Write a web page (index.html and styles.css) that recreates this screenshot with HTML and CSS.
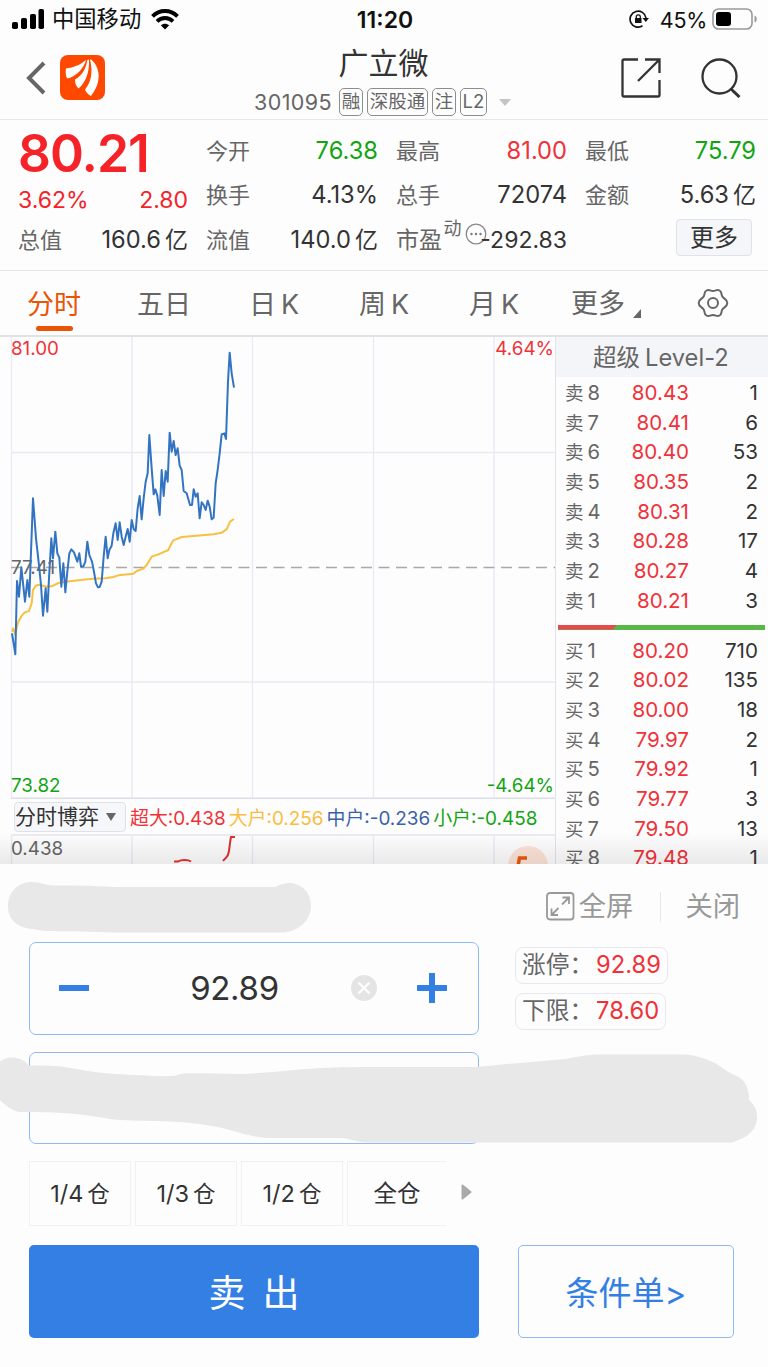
FILE: index.html
```html
<!DOCTYPE html>
<html lang="zh-CN">
<head>
  <meta charset="UTF-8">
  <title>广立微 301095</title>
  <link rel="stylesheet" href="styles.css">
</head>
<body>

  <div class="status-bar">
    <div class="status-left">
      <svg width="32" height="20" viewBox="0 0 32 20">
        <rect x="0" y="13" width="6" height="7" rx="1.8"/>
        <rect x="9" y="9" width="6" height="11" rx="1.8"/>
        <rect x="18" y="5" width="6" height="15" rx="1.8"/>
        <rect x="26.500" y="0" width="5.500" height="20" rx="1.800"/>
      </svg>
      <span class="carrier">中国移动</span>
      <svg class="wifi" width="28" height="21" viewBox="0 0 28 21" fill="none" stroke="#000" stroke-width="3.800">
        <path d="M1.500 7.300C8.500 .2 19.500 .2 26.500 7.300"/>
        <path d="M6 12.300c4.500-4.400 11.500-4.400 16 0"/>
        <path d="M9.800 16.300c2.400-2.200 6-2.200 8.400 0L14 20.500z" fill="#000" stroke="none"/>
      </svg>
    </div>
    <div class="clock">11:20</div>
    <div class="status-right">
      <svg width="21" height="18" viewBox="0 0 21 18" fill="none" stroke="#111" stroke-width="1.700">
        <path d="M13.500 15.800A8 8 0 1 1 17 8"/>
        <path d="M13.500 8h6.500l-3.200 4z" fill="#111" stroke="none"/>
        <rect x="6" y="8" width="6.500" height="5" fill="#111" stroke="none"/>
        <path d="M7.300 8.500V6.800a2 2 0 0 1 4 0v1.700" stroke-width="1.300"/>
      </svg>
      <span class="battery-text">45%</span>
      <svg width="46" height="22" viewBox="0 0 46 22">
        <rect x="1" y="1" width="39" height="20" rx="5.500" fill="none" stroke="#999" stroke-width="1.600"/>
        <rect x="4" y="4" width="15" height="14" rx="3"/>
        <path d="M42.500 7.500c3 1 3 6 0 7z" fill="#999"/>
      </svg>
    </div>
  </div>

  <div class="header">
    <div class="header-side">
      <svg class="back" width="20" height="34" viewBox="0 0 20 34" fill="none" stroke="#666" stroke-width="4">
        <path d="M18 2L3 17l15 15"/>
      </svg>
      <svg class="logo" width="45" height="45" viewBox="0 0 45 45">
        <rect width="45" height="45" rx="8" fill="#ff4800"/>
        <g fill="#fff">
          <path d="M6 13.500C14 12.500 21 9.500 26 5c-2 8-9 15.500-18 18.500C6 23.500 5.300 18 6 13.500z"/>
          <path d="M15 24.500C22 20.500 26 14 27.300 5l1.700-.5C29.500 17 26 27 18.500 33.500c-2.500-2.500-3.500-5-3.500-9z"/>
          <path d="M31 4.500c10 8 10.500 23.500 0 36.500-3-1.500-5-3.500-6-6.500C31.500 27 33 16 30 4.500z"/>
        </g>
      </svg>
    </div>
    <div class="header-title">
      <div class="stock-name">广立微</div>
      <div class="stock-meta">
        <span class="code">301095</span>
        <span class="tag">融</span>
        <span class="tag tag-wide">深股通</span>
        <span class="tag">注</span>
        <span class="tag tag-l2">L2</span>
        <span class="caret"></span>
      </div>
    </div>
    <div class="header-side header-tools">
      <svg width="40" height="40" viewBox="0 0 40 40" fill="none" stroke="#333" stroke-width="2.300">
        <path d="M17 1.500H3Q1.500 1.500 1.500 3v34q0 1.500 1.500 1.500h34q1.500 0 1.500-1.500V22"/>
        <path d="M24 1.500h14.500V15M38 2L17 23"/>
      </svg>
      <svg width="40" height="40" viewBox="0 0 40 40" fill="none" stroke="#333" stroke-width="2.300">
        <circle cx="18.500" cy="18.500" r="17"/>
        <path d="M29.500 30.500l9 8.500" stroke-width="3"/>
      </svg>
    </div>
  </div>

  <div class="quote">
    <div class="quote-main">
      <div class="price">80.21</div>
      <div class="change"><span>3.62%</span><span>2.80</span></div>
    </div>
    <div class="cell"><span class="label">今开</span><span class="value down">76.38</span></div>
    <div class="cell"><span class="label">最高</span><span class="value up">81.00</span></div>
    <div class="cell"><span class="label">最低</span><span class="value down">75.79</span></div>
    <div class="cell"><span class="label">换手</span><span class="value">4.13%</span></div>
    <div class="cell"><span class="label">总手</span><span class="value">72074</span></div>
    <div class="cell"><span class="label">金额</span><span class="value">5.63<i>亿</i></span></div>
    <div class="cell"><span class="label">总值</span><span class="value">160.6<i>亿</i></span></div>
    <div class="cell"><span class="label">流值</span><span class="value">140.0<i>亿</i></span></div>
    <div class="cell pe">
      <span class="label">市盈</span><span class="pe-type">动</span>
      <svg class="pe-info" width="22" height="22" viewBox="0 0 22 22">
        <circle cx="11" cy="11" r="9.800" fill="none" stroke="#888" stroke-width="1.300"/>
        <g fill="#777"><circle cx="6.500" cy="11" r="1.200"/><circle cx="11" cy="11" r="1.200"/><circle cx="15.500" cy="11" r="1.200"/></g>
      </svg>
      <span class="value">-292.83</span>
    </div>
    <div class="cell cell-more"><button class="more-btn">更多</button></div>
  </div>

  <div class="tabs">
    <div class="tab active">分时</div>
    <div class="tab">五日</div>
    <div class="tab">日<b>K</b></div>
    <div class="tab">周<b>K</b></div>
    <div class="tab">月<b>K</b></div>
    <div class="tab tab-more">更多<svg width="8" height="9" viewBox="0 0 8 9"><path d="M8 0v9H0z" fill="#666"/></svg></div>
    <div class="tab-gear">
      <svg width="32" height="30" viewBox="0 0 32 30" fill="none" stroke="#666" stroke-width="2">
        <path d="M9.500 2.500C12 .8 13 3 16 3s4-2.200 6.500-.5c2.700 1.500 1.300 3.500 2.800 6s5 2.500 5 6.500-3.500 4-5 6.500-.1 4.500-2.800 6C20 29.200 19 27 16 27s-4 2.200-6.500.5c-2.700-1.500-1.300-3.500-2.800-6s-5-2.500-5-6.500 3.500-4 5-6.500.1-4.500 2.800-6z"/>
        <circle cx="16" cy="15" r="5"/>
      </svg>
    </div>
  </div>

  <div class="market">
    <div class="charts">
      <svg class="chart" width="555" height="462" viewBox="0 0 555 462">
        <g stroke="#e9eaf3" stroke-width="1.300" fill="none">
          <path d="M11.500 0v461M132 0v461M252.500 0v461M373.500 0v461M494 0v461"/>
          <path d="M11 115.500h544M11 345h544"/>
        </g>
        <path d="M11 461.500h544" stroke="#dcdee8" stroke-width="2"/>
        <path d="M11 230.500h544" stroke="#a9a9a9" stroke-width="1.500" stroke-dasharray="11 6.500"/>
        <text x="11" y="236.500" class="axis">77.41</text>
        <g transform="translate(0 -2) scale(.33333)" fill="none" stroke-width="6" stroke-linejoin="round">
          <polyline stroke="#f8c040" points="36,890 40,880 45,898 55,860 65,842 75,832 87,828 95,805 99,765 107,752 118,749 140,755 155,754 175,744 195,741 215,738 250,734 280,731 315,730 340,726 355,721 400,716 410,708 430,701 440,690 455,665 475,658 505,645 512,630 520,616 545,606 590,602 640,598 665,593 680,583 690,560 702,552"/>
          <polyline stroke="#3374c2" points="36,895 46,958 51,738 57,785 64,697 75,800 82,735 88,785 99,490 108,610 118,700 123,750 129,842 137,760 142,830 147,730 154,610 159,670 166,590 172,655 178,668 184,755 190,685 196,772 202,710 208,655 214,643 222,652 232,680 238,655 243,695 250,694 256,680 262,620 268,660 276,680 281,705 288,745 294,757 299,756 305,740 311,665 317,605 323,670 328,645 335,632 340,595 347,565 353,615 359,562 365,605 371,630 377,605 383,582 389,620 395,555 401,582 407,588 413,520 419,483 425,553 431,490 437,440 443,415 448,300 455,400 461,478 466,463 472,482 479,540 485,405 491,483 497,408 503,440 509,293 515,350 521,318 527,360 533,340 539,392 545,405 551,468 560,475 570,510 576,510 581,463 587,485 593,475 599,550 605,502 611,510 617,525 623,497 629,515 635,553 641,548 647,445 653,405 659,355 665,298 673,295 678,312 684,140 689,53 695,115 702,158"/>
        </g>
        <text x="11" y="18" class="axis axis-up">81.00</text>
        <text x="554" y="18" class="axis axis-up" text-anchor="end">4.64%</text>
        <text x="11" y="455" class="axis axis-down">73.82</text>
        <text x="554" y="455" class="axis axis-down" text-anchor="end">-4.64%</text>
      </svg>

      <div class="indicator">
        <button class="indicator-btn">分时博弈<span class="drop"></span></button>
        <span class="ind up">超大:0.438</span>
        <span class="ind ind-big">大户:0.256</span>
        <span class="ind ind-mid">中户:-0.236</span>
        <span class="ind down">小户:-0.458</span>
      </div>

      <svg class="subchart" width="555" height="30" viewBox="0 0 555 30">
        <path d="M11 1h544" stroke="#e4e5ec" stroke-width="1.500"/>
        <path d="M11.500 1v29M132 1v29M252.500 1v29M373.500 1v29M494 1v29" stroke="#e9eaf3" stroke-width="1.300"/>
        <text x="11" y="20.500" class="axis">0.438</text>
        <path d="M174 27.500h4c3-2 10-2 13 0" fill="none" stroke="#e23030" stroke-width="2"/>
        <path d="M223 27c3-4 5-3 6-10 1-7 1-9 2-14h4" fill="none" stroke="#e23030" stroke-width="2"/>
        <circle cx="528" cy="32" r="20" fill="#fde3d6"/>
        <path d="M527 24h-7.500l-1.500 8" fill="none" stroke="#e8590c" stroke-width="3.500"/>
      </svg>
    </div>

    <div class="book">
      <div class="book-title">超级<span>Level-2</span></div>
      <div class="book-rows">
        <div class="row"><span>卖<b>8</b></span><span class="up">80.43</span><span>1</span></div>
        <div class="row"><span>卖<b>7</b></span><span class="up">80.41</span><span>6</span></div>
        <div class="row"><span>卖<b>6</b></span><span class="up">80.40</span><span>53</span></div>
        <div class="row"><span>卖<b>5</b></span><span class="up">80.35</span><span>2</span></div>
        <div class="row"><span>卖<b>4</b></span><span class="up">80.31</span><span>2</span></div>
        <div class="row"><span>卖<b>3</b></span><span class="up">80.28</span><span>17</span></div>
        <div class="row"><span>卖<b>2</b></span><span class="up">80.27</span><span>4</span></div>
        <div class="row"><span>卖<b>1</b></span><span class="up">80.21</span><span>3</span></div>
      </div>
      <div class="ratio"><div class="ratio-sell" style="width: 28.5%"></div></div>
      <div class="book-rows">
        <div class="row"><span>买<b>1</b></span><span class="up">80.20</span><span>710</span></div>
        <div class="row"><span>买<b>2</b></span><span class="up">80.02</span><span>135</span></div>
        <div class="row"><span>买<b>3</b></span><span class="up">80.00</span><span>18</span></div>
        <div class="row"><span>买<b>4</b></span><span class="up">79.97</span><span>2</span></div>
        <div class="row"><span>买<b>5</b></span><span class="up">79.92</span><span>1</span></div>
        <div class="row"><span>买<b>6</b></span><span class="up">79.77</span><span>3</span></div>
        <div class="row"><span>买<b>7</b></span><span class="up">79.50</span><span>13</span></div>
        <div class="row"><span>买<b>8</b></span><span class="up">79.48</span><span>1</span></div>
      </div>
    </div>
    <div class="market-shade"></div>
  </div>

  <div class="trade">
    <div class="trade-head">
      <svg width="29" height="29" viewBox="0 0 29 29" fill="none" stroke="#999" stroke-width="1.800">
        <rect x="1" y="1" width="26.500" height="26.500" rx="3"/>
        <path d="M16 12.500l7-7M16.500 5.500H23V12M12.500 16l-7 7M5.500 16.500V23H12"/>
      </svg>
      <span class="full">全屏</span>
      <span class="split"></span>
      <span>关闭</span>
    </div>

    <div class="trade-form">
      <div class="inputs">
        <div class="field">
          <svg width="30" height="30" viewBox="0 0 30 30"><path d="M0 15h30" stroke="#337fe3" stroke-width="6"/></svg>
          <span class="field-value">92.89</span>
          <svg class="clear" width="26" height="26" viewBox="0 0 26 26">
            <circle cx="13" cy="13" r="13" fill="#e4e4e4"/>
            <path d="M7.500 7.500l11 11M18.500 7.500l-11 11" stroke="#fff" stroke-width="2.200"/>
          </svg>
          <svg width="30" height="30" viewBox="0 0 30 30"><path d="M0 15h30M15 0v30" stroke="#337fe3" stroke-width="6"/></svg>
        </div>
        <div class="field"></div>
        <div class="portions">
          <button class="portion">1/4<i>仓</i></button>
          <button class="portion">1/3<i>仓</i></button>
          <button class="portion">1/2<i>仓</i></button>
          <button class="portion portion-cut">全仓</button>
          <svg width="11" height="16" viewBox="0 0 11 16"><path d="M1.500 1.500L9.500 8l-8 6.500z" fill="#aaa" stroke="#aaa" stroke-width="2" stroke-linejoin="round"/></svg>
        </div>
      </div>
      <div class="limits">
        <div class="limit">涨停：<span>92.89</span></div>
        <div class="limit">下限：<span>78.60</span></div>
      </div>
    </div>

    <div class="actions">
      <button class="sell-btn">卖出</button>
      <button class="cond-btn">条件单&gt;</button>
    </div>

    <!-- masks over the account name and the amount field -->
    <svg class="mask" width="768" height="300" viewBox="0 0 768 300" fill="#e8e8e8">
      <path d="M8 42C8 28 18 18 32 18c8 0 12 3 22 3.500 22 0 35 0 61 1.500h160c6-3 10-4 14-4 12 0 22 9 22 23s-12 25-27 26.500H115c-22-1-50-1-70-1.500-7-1-13-2-19-3C15 61 8 54 8 42z"/>
      <path d="M0 197.500C8 192 20 191.500 29 201.500c10 0 18 0 26 .5 11 .5 20 3 30 4.500 17 3 32 3.500 50 4.500 13 .5 25 1.500 38 1 4 0 6-2.500 10-2.500 20-.5 37 .5 57 .5 30-1 50-4 80-6 30-1.500 60-1 150-1 13 0 22-1.500 37-3l58-5c12-2 20-4.500 35-4.500h85c12 1 21 4 30 8.500 8 5 12 9 22 13 8 4 12 12 12 24 11 9 11 26-1 35-5 4-9 4-15 7.500H365c-9-1-16-4-24-4.500h-73c-18-1-30-6-48-10.500-18-3.500-31-5-50-6-21-.5-30-.5-50-1.500-20-2-28-4.500-45-6-20-2-35-1.500-55-2-8-1-15-7-20-12z"/>
    </svg>
  </div>

</body>
</html>
```
FILE: styles.css
```css
* {
  box-sizing: border-box;
}

body {
  margin: 0;
  width: 768px;
  height: 1367px;
  overflow: hidden;
  background: #fdfdfe;
  color: #333;
  font-family: Inter, "Noto Sans CJK SC", sans-serif;
  font-weight: 400;
}

svg { display: block; flex: none; }
i, b { font-style: normal; font-weight: 400; }

button {
  padding: 0;
  font-family: inherit;
  color: #333;
  background: none;
}

.up { color: #f03238; }
.down { color: #12a512; }

/* status bar */
.status-bar {
  display: flex;
  height: 40px;
  align-items: center;
  justify-content: space-between;
  padding: 0 10px 2px 12px;
  color: #111;
}

.status-left, .status-right {
  display: flex;
  width: 310px;
  align-items: center;
}

.status-right { justify-content: flex-end; }
.carrier { margin-left: 8px; font-size: 22.3px; line-height: 36px; }
.wifi { margin-left: 10px; }

.clock {
  padding-top: 2px;
  font-size: 23px;
  font-weight: 600;
}

.battery-text { margin: 2px 5px 0 10px; font-size: 21.5px; letter-spacing: -.3px; }

/* header */
.header {
  display: flex;
  height: 80px;
  justify-content: space-between;
  border-bottom: 1px solid #e6e6e8;
  padding: 0 27px 0 26px;
}

.header-side {
  display: flex;
  width: 130px;
  align-items: center;
  padding-bottom: 4px;
}

.logo { margin-left: 14px; }
.header-tools { justify-content: flex-end; gap: 40px; }

.header-title {
  display: flex;
  flex-direction: column;
  align-items: center;
}

.stock-name { font-size: 30px; line-height: 46px; }

.stock-meta {
  display: flex;
  align-items: center;
  gap: 4px;
  height: 32px;
  margin-left: -2px;
  color: #666;
}

.code { margin-right: 3px; font-size: 21.5px; letter-spacing: .4px; }

.tag {
  width: 24px;
  height: 28px;
  border: 1.5px solid #8d8d8d;
  border-radius: 5px;
  font-size: 18.5px;
  line-height: 25px;
  text-align: center;
  white-space: nowrap;
}

.tag-wide { width: 61px; }
.tag-l2 { width: 27px; }

.caret {
  margin-left: 8px;
  border: 6px solid transparent;
  border-top: 7px solid #c4c4c4;
  border-bottom: 0;
}

/* quote */
.quote {
  display: grid;
  grid-template-columns: 170px 172px 171px 171px;
  grid-template-rows: 44px 44px 46px;
  column-gap: 18px;
  height: 151px;
  padding: 9px 12px 0 18px;
  border-bottom: 1px solid #e6e6e8;
}

.quote-main { grid-row: span 2; color: #f52227; }
.price { font-size: 51.5px; font-weight: 600; line-height: 49px; letter-spacing: -1px; }

.change {
  display: flex;
  justify-content: space-between;
  font-size: 23px;
  line-height: 45px;
}

.cell {
  display: flex;
  align-items: center;
  justify-content: space-between;
}

.label { font-size: 22px; line-height: 32px; color: #666; }
.value { font-size: 23.7px; line-height: 32px; white-space: nowrap; }
.value i { margin-left: 4px; font-size: 23px; }

.pe .value { margin-left: -4px; font-size: 23px; }
.pe .label { font-size: 23px; }
.pe-type { font-size: 18px; line-height: 20px; margin-bottom: 22px; color: #666; }
.pe-info { margin: 0 -4px 12px 2px; }
.cell-more { justify-content: flex-end; }

.more-btn {
  width: 76px;
  height: 37px;
  margin: 0 4px 6px 0;
  border: 1.5px solid #e0e2ea;
  border-radius: 4px;
  background: #f5f6fa;
  font-size: 24px;
  line-height: 33px;
}

/* period tabs */
.tabs {
  display: flex;
  height: 66px;
  border-bottom: 2px solid #e1e2e8;
  color: #666;
}

.tab {
  display: flex;
  width: 110px;
  height: 64px;
  justify-content: center;
  padding-right: 2px;
  font-size: 27px;
  line-height: 67px;
  position: relative;
}

.tab b { margin-left: 5px; }
.tab.active { color: #ea5404; }

.tab.active::after {
  content: "";
  position: absolute;
  left: 36px;
  bottom: 4px;
  width: 37px;
  height: 5.5px;
  border-radius: 3px;
  background: #ea5404;
}

.tab-more { width: 114px; align-items: center; }
.tab-more svg { margin: 21px 0 0 8px; }
.tab-gear { padding: 17px 0 0 33px; }

/* charts and order book */
.market {
  display: flex;
  height: 527px;
  overflow: hidden;
  position: relative;
}

.charts { width: 555px; }
.axis { font-size: 18.8px; fill: #666; }
.axis-up { fill: #f03238; }
.axis-down { fill: #12a512; }

.indicator {
  display: flex;
  height: 35px;
  align-items: center;
  padding-left: 14px;
  font-size: 18.9px;
  white-space: nowrap;
}

.indicator-btn {
  display: flex;
  width: 112px;
  height: 30px;
  align-items: center;
  border: 1.5px solid #dfe1e9;
  border-radius: 4px;
  background: #f6f7fa;
  font-size: 21px;
  line-height: 26px;
  margin-right: 4px;
}

.drop {
  margin-left: 7px;
  border: 5px solid transparent;
  border-top: 8px solid #666;
  border-bottom: 0;
}

.ind { margin-right: 3px; }
.ind-big { color: #f8bd40; }
.ind-mid { color: #3a62a8; }

.book {
  width: 213px;
  border-left: 1px solid #e1e2ea;
}

.book-title {
  height: 40px;
  padding-left: 37px;
  background: #f4f5f9;
  color: #666;
  font-size: 23.5px;
  line-height: 41px;
}

.book-title span { margin-left: 5px; font-size: 23.7px; }
.book-rows { padding: 1px 10px 0 9px; }

.row {
  display: grid;
  grid-template-columns: 40px 84px 1fr;
  height: 29.7px;
  font-size: 20.6px;
  line-height: 29.7px;
  text-align: right;
}

.row span:first-child { text-align: left; font-size: 18.5px; color: #666; }
.row b { margin-left: 4px; font-size: 20.2px; }

.ratio {
  height: 5px;
  margin: 9px 3px 5px 2px;
  background: #57b847;
}

.ratio-sell {
  height: 5px;
  background: #e9494b;
  clip-path: polygon(0 0, 100% 0, calc(100% - 4px) 100%, 0 100%);
}

.market-shade {
  position: absolute;
  left: 0;
  bottom: 0;
  width: 768px;
  height: 32px;
  background: linear-gradient(rgba(0, 0, 0, 0), rgba(0, 0, 0, .08));
}

/* trade panel */
.trade {
  height: 503px;
  padding: 0 28px 0 29px;
  background: #fdfdfe;
  position: relative;
}

.trade-head {
  display: flex;
  height: 78px;
  align-items: center;
  justify-content: flex-end;
  padding-top: 7px;
  font-size: 27.3px;
  line-height: 40px;
  color: #999;
}

.full { margin-left: 4px; }
.split { width: 1px; height: 30px; margin: 0 24px 0 27px; background: #e8e8e8; }

.trade-form { display: flex; gap: 36px; }
.inputs { width: 450px; }

.field {
  display: flex;
  height: 92.5px;
  align-items: center;
  margin-bottom: 17px;
  padding: 0 30px 0 29px;
  border: 1.5px solid #8dbaf4;
  border-radius: 7px;
}

.field-value {
  width: 262px;
  padding-left: 29px;
  text-align: center;
  font-size: 33px;
  letter-spacing: -.3px;
}

.clear { margin: 0 40px 0 0; }

.portions { display: flex; align-items: center; gap: 4px; }

.portion {
  width: 102px;
  height: 65px;
  border: 1.5px solid #f1f1f2;
  font-size: 23.5px;
  line-height: 62px;
}

.portion i { margin-left: 4px; font-size: 22.5px; }
.portion-cut { width: 99px; border-right: 0; }
.portions svg { margin: 0 0 4px 11px; }

.limits {
  display: flex;
  flex-direction: column;
  align-items: flex-start;
  gap: 9.5px;
  padding-top: 5px;
}

.limit {
  height: 36.5px;
  padding: 0 6px;
  border: 1.5px solid #e8e9f0;
  border-radius: 8px;
  font-size: 23.7px;
  line-height: 34px;
  color: #666;
}

.limit span { color: #f03238; margin-left: 3px; }

.actions {
  display: flex;
  gap: 39px;
  margin-top: 18.5px;
}

.sell-btn {
  width: 450px;
  height: 93px;
  border: 0;
  border-radius: 5px;
  background: #337fe3;
  color: #fff;
  font-size: 37px;
  letter-spacing: 17px;
  text-indent: 17px;
}

.cond-btn {
  width: 216px;
  height: 93px;
  border: 1.5px solid #8dbaf4;
  border-radius: 5px;
  color: #337fe3;
  font-size: 33px;
}

.mask {
  position: absolute;
  left: 0;
  top: 0;
}
```
